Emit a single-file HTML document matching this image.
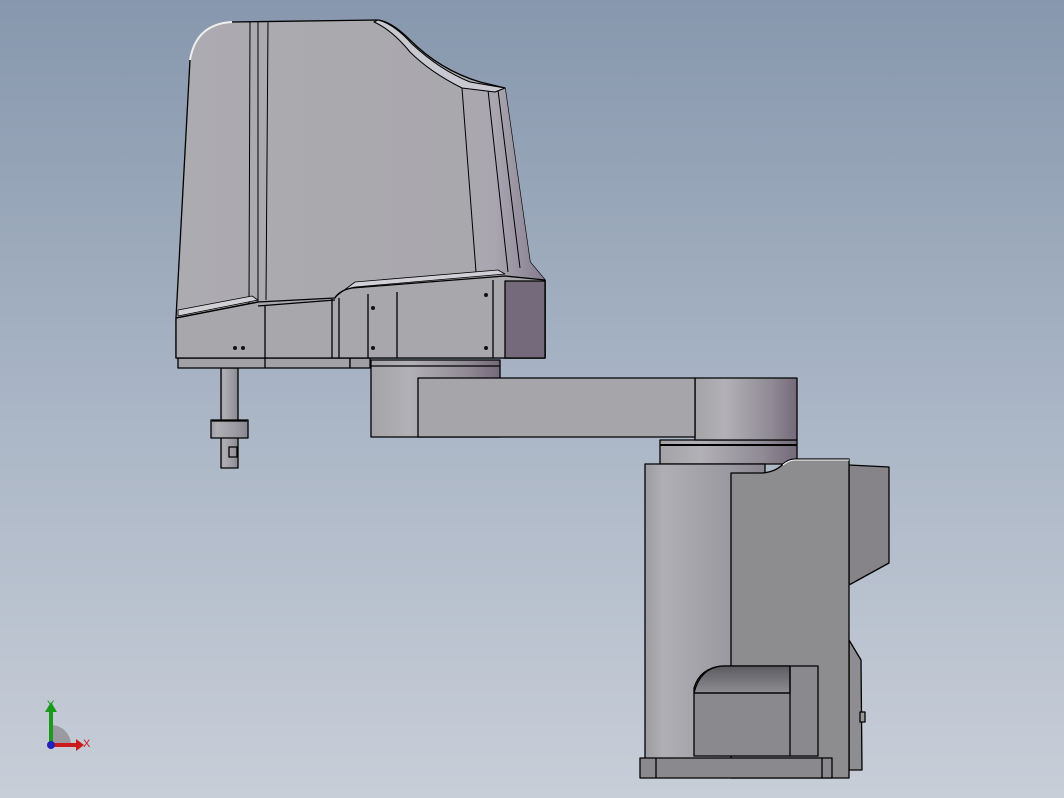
<!DOCTYPE html>
<html><head><style>
html,body{margin:0;padding:0;width:1064px;height:798px;overflow:hidden;}
body{background:linear-gradient(#8797ad,#a9b5c5 50%,#c8ced8);}
svg{position:absolute;left:0;top:0;}
text{font-family:"Liberation Sans",sans-serif;font-size:11px;}
</style></head><body>
<svg width="1064" height="798" viewBox="0 0 1064 798">
<defs>
<linearGradient id="cyl" x1="0" x2="1"><stop offset="0" stop-color="#a4a3a8"/><stop offset="0.3" stop-color="#b2b1b6"/><stop offset="0.75" stop-color="#8f8a94"/><stop offset="1" stop-color="#746a7a"/></linearGradient>
<linearGradient id="cyl2" x1="0" x2="1"><stop offset="0" stop-color="#9c9ba0"/><stop offset="0.15" stop-color="#b0afb4"/><stop offset="0.7" stop-color="#9a99a0"/><stop offset="1" stop-color="#8a8590"/></linearGradient>
<linearGradient id="side" x1="0" x2="1"><stop offset="0" stop-color="#aaa9ae"/><stop offset="0.4" stop-color="#a9a6b0"/><stop offset="1" stop-color="#857c8e"/></linearGradient>
<linearGradient id="dome" x1="0" x2="0" y1="0" y2="1"><stop offset="0" stop-color="#5c5b60"/><stop offset="1" stop-color="#8e8d92"/></linearGradient>
<linearGradient id="face" x1="0" x2="1"><stop offset="0" stop-color="#acabb0"/><stop offset="1" stop-color="#a8a7ac"/></linearGradient>
</defs>
<g stroke="#000" stroke-width="1.3" stroke-linejoin="round">
<rect x="221" y="368" width="17" height="100" fill="url(#cyl2)"/>
<rect x="211" y="420" width="37" height="18" fill="url(#cyl2)"/>
<line x1="212" y1="421" x2="247" y2="421"/>
<rect x="229" y="447" width="8" height="10" fill="none"/>
<rect x="178" y="358" width="172" height="10" fill="#a3a2a7"/>
<line x1="265" y1="358" x2="265" y2="368"/>
<rect x="350" y="358" width="20" height="10" fill="#a09fa4"/>
<rect x="371" y="360" width="129" height="77" fill="url(#cyl)"/>
<line x1="371" y1="366" x2="500" y2="366"/>
<rect x="660" y="440" width="137" height="24" fill="url(#cyl)"/>
<line x1="660" y1="445" x2="797" y2="445" stroke-width="2"/>
<rect x="695" y="378" width="102" height="62" fill="url(#cyl)"/>
<rect x="418" y="378" width="277" height="59" fill="#a6a5aa"/>
<rect x="645" y="464" width="120" height="295" fill="url(#cyl2)"/>
<path d="M849,465 L889,467 L889,563 L849,585 Z" fill="#868389"/>
<path d="M849,640 L861,660 L862,770 L849,770 Z" fill="#8e8d92"/>
<rect x="860" y="712" width="5" height="10" fill="#999"/>
<path d="M731,473 L762,473 Q775,472 782,465 Q788,459 795,459 L849,459 L849,778 L731,778 Z" fill="#8d8d8f"/>
<path d="M783,465 Q789,460 795,460 L849,460" fill="none" stroke="#fff" stroke-width="1"/>
<path d="M694,756 L694,688 Q700,668 722,666 L818,666 L818,756 Z" fill="#8a898e"/>
<path d="M694,693 Q700,668 722,666 L790,666 L790,693 Z" fill="url(#dome)"/>
<line x1="694" y1="693" x2="790" y2="693"/>
<line x1="790" y1="666" x2="790" y2="756"/>
<rect x="640" y="758" width="192" height="20" fill="#8a898e"/>
<line x1="656" y1="758" x2="656" y2="778"/>
<line x1="822" y1="758" x2="822" y2="778"/>
<!-- head main -->
<path d="M176,318 L190,60 Q196,24 232,22 L378,20 Q392,22 410,40 Q440,70 480,82 L505,88 L530,262 L545,280 L545,358 L176,358 Z" fill="url(#face)"/>
<path d="M462,88 L505,88 L530,262 L545,280 L505,281 L476,272 Z" fill="url(#side)" stroke="none"/>
<path d="M462,88 L476,272 M488,90 L508,272 M498,90 L520,268" fill="none" stroke-width="1"/>
<rect x="505" y="281" width="40" height="77" fill="#756a7b"/>
<path d="M378,20 Q394,24 412,44 Q440,70 470,82 L505,88 L495,92 L462,88 Q430,72 410,52 Q392,30 374,22 Z" fill="#c9c9d1" stroke-width="1"/>
<path d="M190,60 Q196,24 232,22" fill="none" stroke="#eee" stroke-width="2"/>
<path d="M178,318 L258,302 L258,22 M250,22 L249,303 M268,22 L266,300" fill="none" stroke-width="1"/>
<path d="M176,318 L258,302 L335,298 Q340,290 352,288 L505,276 L545,280 L545,358 L176,358 Z" fill="#a8a7ac"/>
<path d="M176,318 L258,302 M258,306 L335,300" fill="none"/>
<rect x="505" y="281" width="40" height="77" fill="#756a7b"/>
<path d="M178,316 L258,300 L252,296 L178,310 Z M335,297 Q342,289 355,287 L505,274 L498,270 L355,282 Z" fill="#d0d0d6" stroke-width="0.8"/>
<line x1="265" y1="306" x2="265" y2="358"/>
<line x1="332" y1="299" x2="332" y2="358"/>
<line x1="339" y1="298" x2="339" y2="358"/>
<line x1="368" y1="294" x2="368" y2="358"/>
<line x1="397" y1="292" x2="397" y2="358"/>
<line x1="493" y1="280" x2="493" y2="358"/>
</g>
<g fill="#111">
<circle cx="235" cy="348" r="2"/><circle cx="243" cy="348" r="2"/>
<circle cx="373" cy="308" r="2"/><circle cx="373" cy="348" r="2"/>
<circle cx="486" cy="295" r="2"/><circle cx="486" cy="348" r="2"/>
</g>
<path d="M51,745 L51,725 A20,20 0 0 1 71,745 Z" fill="#9a9aa0"/>
<rect x="49" y="708" width="4" height="37" fill="#1a9a1a"/>
<path d="M45,712 L51,702 L57,712 Z" fill="#1a9a1a"/>
<rect x="51" y="743" width="26" height="4" fill="#cc1a1a"/>
<path d="M76,739 L84,745 L76,751 Z" fill="#cc1a1a"/>
<circle cx="51" cy="745" r="4" fill="#2222bb"/>
<text x="47" y="708" fill="#1a9a1a">Y</text>
<text x="83" y="747" fill="#cc1a1a">X</text>
</svg>
</body></html>
